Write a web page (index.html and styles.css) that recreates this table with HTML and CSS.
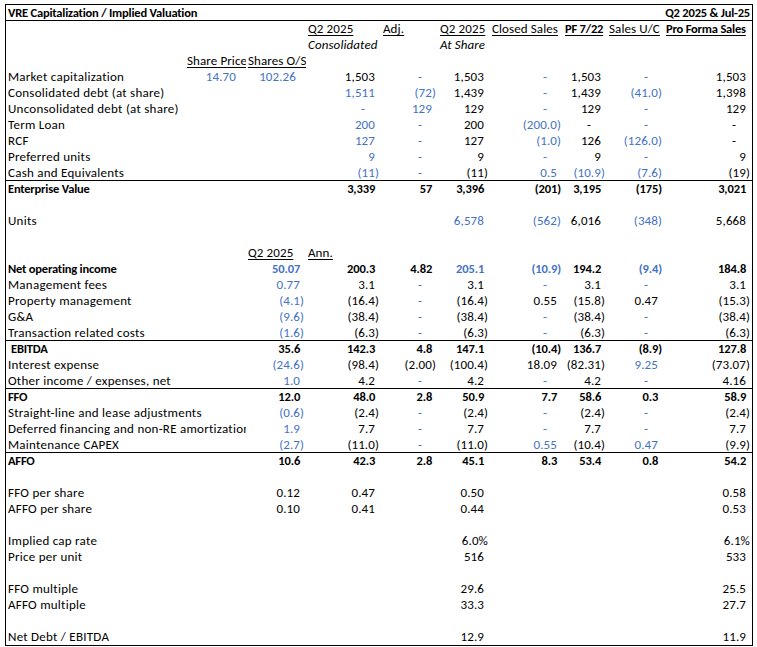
FILE: index.html
```html
<!DOCTYPE html>
<html>
<head>
<meta charset="utf-8">
<link rel="stylesheet" href="styles.css">
</head>
<body>
<div class="sheet">
  <div class="title"><span>VRE Capitalization / Implied Valuation</span><span>Q2 2025 &amp; Jul-25</span></div>

  <div class="row"><div></div><div></div><div></div><div class="h u">Q2 2025</div><div class="h u">Adj.</div><div class="h u">Q2 2025</div><div class="h u">Closed Sales</div><div class="h u bo">PF 7/22</div><div class="h u">Sales U/C</div><div class="h u bo">Pro Forma Sales</div></div>
  <div class="row"><div></div><div></div><div></div><div class="h i">Consolidated</div><div></div><div class="h i">At Share</div><div></div><div></div><div></div><div></div></div>
  <div class="row"><div></div><div class="h u">Share Price</div><div class="h u">Shares O/S</div><div></div><div></div><div></div><div></div><div></div><div></div><div></div></div>

  <div class="row"><div class="l">Market capitalization</div><div class="n b x">14.70</div><div class="n b x">102.26</div><div class="n">1,503</div><div class="n d b">-</div><div class="n">1,503</div><div class="n d b">-</div><div class="n">1,503</div><div class="n d b">-</div><div class="n">1,503</div></div>
  <div class="row"><div class="l s2">Consolidated debt (at share)</div><div></div><div class="n b">1,511</div><div class="n ng b">(72)</div><div class="n">1,439</div><div class="n d b">-</div><div class="n">1,439</div><div class="n ng b">(41.0)</div><div class="n">1,398</div></div>
  <div class="row"><div class="l s2">Unconsolidated debt (at share)</div><div></div><div class="n d b">-</div><div class="n b">129</div><div class="n">129</div><div class="n d b">-</div><div class="n">129</div><div class="n d b">-</div><div class="n">129</div></div>
  <div class="row"><div class="l s2">Term Loan</div><div></div><div class="n b">200</div><div class="n d b">-</div><div class="n">200</div><div class="n ng b">(200.0)</div><div class="n d">-</div><div class="n d b">-</div><div class="n d">-</div></div>
  <div class="row"><div class="l s2">RCF</div><div></div><div class="n b">127</div><div class="n d b">-</div><div class="n">127</div><div class="n ng b">(1.0)</div><div class="n">126</div><div class="n ng b">(126.0)</div><div class="n d">-</div></div>
  <div class="row"><div class="l s2">Preferred units</div><div></div><div class="n b">9</div><div class="n d b">-</div><div class="n">9</div><div class="n d b">-</div><div class="n">9</div><div class="n d b">-</div><div class="n">9</div></div>
  <div class="row rule"><div class="l s2">Cash and Equivalents</div><div></div><div class="n ng b">(11)</div><div class="n d b">-</div><div class="n ng">(11)</div><div class="n b">0.5</div><div class="n ng b">(10.9)</div><div class="n ng b">(7.6)</div><div class="n ng">(19)</div></div>
  <div class="row bold"><div class="l s2">Enterprise Value</div><div></div><div class="n">3,339</div><div class="n">57</div><div class="n">3,396</div><div class="n ng">(201)</div><div class="n">3,195</div><div class="n ng">(175)</div><div class="n">3,021</div></div>

  <div class="row"></div>
  <div class="row"><div class="l s2">Units</div><div></div><div></div><div></div><div class="n b">6,578</div><div class="n ng b">(562)</div><div class="n">6,016</div><div class="n ng b">(348)</div><div class="n">5,668</div></div>
  <div class="row"></div>

  <div class="row"><div></div><div></div><div class="h u">Q2 2025</div><div class="h u">Ann.</div><div></div><div></div><div></div><div></div><div></div><div></div></div>
  <div class="row bold"><div class="l s2">Net operating income</div><div class="n b">50.07</div><div class="n">200.3</div><div class="n">4.82</div><div class="n b">205.1</div><div class="n ng b">(10.9)</div><div class="n">194.2</div><div class="n ng b">(9.4)</div><div class="n">184.8</div></div>
  <div class="row"><div class="l s2">Management fees</div><div class="n b">0.77</div><div class="n">3.1</div><div class="n d b">-</div><div class="n">3.1</div><div class="n d b">-</div><div class="n">3.1</div><div class="n d b">-</div><div class="n">3.1</div></div>
  <div class="row"><div class="l s2">Property management</div><div class="n ng b">(4.1)</div><div class="n ng">(16.4)</div><div class="n d b">-</div><div class="n ng">(16.4)</div><div class="n">0.55</div><div class="n ng">(15.8)</div><div class="n">0.47</div><div class="n ng">(15.3)</div></div>
  <div class="row"><div class="l s2">G&amp;A</div><div class="n ng b">(9.6)</div><div class="n ng">(38.4)</div><div class="n d b">-</div><div class="n ng">(38.4)</div><div class="n d b">-</div><div class="n ng">(38.4)</div><div class="n d b">-</div><div class="n ng">(38.4)</div></div>
  <div class="row rule"><div class="l s2">Transaction related costs</div><div class="n ng b">(1.6)</div><div class="n ng">(6.3)</div><div class="n d b">-</div><div class="n ng">(6.3)</div><div class="n d b">-</div><div class="n ng">(6.3)</div><div class="n d b">-</div><div class="n ng">(6.3)</div></div>
  <div class="row bold"><div class="l s2 ind">EBITDA</div><div class="n">35.6</div><div class="n">142.3</div><div class="n">4.8</div><div class="n">147.1</div><div class="n ng">(10.4)</div><div class="n">136.7</div><div class="n ng">(8.9)</div><div class="n">127.8</div></div>
  <div class="row"><div class="l s2">Interest expense</div><div class="n ng b">(24.6)</div><div class="n ng">(98.4)</div><div class="n ng">(2.00)</div><div class="n ng">(100.4)</div><div class="n">18.09</div><div class="n ng">(82.31)</div><div class="n b">9.25</div><div class="n ng">(73.07)</div></div>
  <div class="row rule"><div class="l s2">Other income / expenses, net</div><div class="n b">1.0</div><div class="n">4.2</div><div class="n d b">-</div><div class="n">4.2</div><div class="n d b">-</div><div class="n">4.2</div><div class="n d b">-</div><div class="n">4.16</div></div>
  <div class="row bold"><div class="l s2">FFO</div><div class="n">12.0</div><div class="n">48.0</div><div class="n">2.8</div><div class="n">50.9</div><div class="n">7.7</div><div class="n">58.6</div><div class="n">0.3</div><div class="n">58.9</div></div>
  <div class="row"><div class="l s2">Straight-line and lease adjustments</div><div class="n ng b">(0.6)</div><div class="n ng">(2.4)</div><div class="n d b">-</div><div class="n ng">(2.4)</div><div class="n d b">-</div><div class="n ng">(2.4)</div><div class="n d b">-</div><div class="n ng">(2.4)</div></div>
  <div class="row"><div class="l s2">Deferred financing and non-RE amortization</div><div class="n b">1.9</div><div class="n">7.7</div><div class="n d b">-</div><div class="n">7.7</div><div class="n d b">-</div><div class="n">7.7</div><div class="n d b">-</div><div class="n">7.7</div></div>
  <div class="row rule"><div class="l s2">Maintenance CAPEX</div><div class="n ng b">(2.7)</div><div class="n ng">(11.0)</div><div class="n d b">-</div><div class="n ng">(11.0)</div><div class="n b">0.55</div><div class="n ng">(10.4)</div><div class="n b">0.47</div><div class="n ng">(9.9)</div></div>
  <div class="row bold"><div class="l s2">AFFO</div><div class="n">10.6</div><div class="n">42.3</div><div class="n">2.8</div><div class="n">45.1</div><div class="n">8.3</div><div class="n">53.4</div><div class="n">0.8</div><div class="n">54.2</div></div>

  <div class="row"></div>
  <div class="row"><div class="l s2">FFO per share</div><div class="n">0.12</div><div class="n">0.47</div><div></div><div class="n">0.50</div><div></div><div></div><div></div><div class="n">0.58</div></div>
  <div class="row"><div class="l s2">AFFO per share</div><div class="n">0.10</div><div class="n">0.41</div><div></div><div class="n">0.44</div><div></div><div></div><div></div><div class="n">0.53</div></div>
  <div class="row"></div>
  <div class="row"><div class="l s2">Implied cap rate</div><div></div><div></div><div></div><div class="n ng">6.0%</div><div></div><div></div><div></div><div class="n ng">6.1%</div></div>
  <div class="row"><div class="l s2">Price per unit</div><div></div><div></div><div></div><div class="n">516</div><div></div><div></div><div></div><div class="n">533</div></div>
  <div class="row"></div>
  <div class="row"><div class="l s2">FFO multiple</div><div></div><div></div><div></div><div class="n">29.6</div><div></div><div></div><div></div><div class="n">25.5</div></div>
  <div class="row"><div class="l s2">AFFO multiple</div><div></div><div></div><div></div><div class="n">33.3</div><div></div><div></div><div></div><div class="n">27.7</div></div>
  <div class="row"></div>
  <div class="row"><div class="l s2">Net Debt / EBITDA</div><div></div><div></div><div></div><div class="n">12.9</div><div></div><div></div><div></div><div class="n">11.9</div></div>
</div>
</body>
</html>
```

FILE: styles.css
```css
* { box-sizing: border-box; }

body {
  margin: 0;
  background: #ffffff;
  color: #000000;
  font-family: Carlito, Calibri, Lato, "Liberation Sans", sans-serif;
  font-size: 13px;
  letter-spacing: 0.25px;
}

.sheet {
  margin: 4px 0 0 5px;
  width: 748px;
  border: 1px solid #000000;
}

.title {
  display: flex;
  justify-content: space-between;
  height: 16px;
  line-height: 15px;
  padding: 0 2px 0 2px;
  font-weight: 700;
  font-size: 12.5px;
  letter-spacing: -0.2px;
  border-bottom: 1px solid #000000;
}

.row {
  display: grid;
  grid-template-columns: 179px 61px 60px 75px 57px 52px 73px 44px 57px 88px;
  height: 16px;
  line-height: 16px;
}

.row > div {
  overflow: hidden;
  white-space: nowrap;
  min-width: 0;
}

.row.rule {
  border-bottom: 1px solid #000000;
  line-height: 15px;
}

.bold,
.bo {
  font-weight: 700;
  font-size: 12.5px;
  letter-spacing: -0.2px;
}

.l { padding-left: 2px; }
.ind { padding-left: 5px; }
.s2 { grid-column: span 2; }

.h {
  padding-left: 2px;
  letter-spacing: 0.1px;
}
.h.bo { letter-spacing: -0.2px; }
.u {
  text-decoration: underline;
  text-underline-offset: 2px;
}
.i { font-style: italic; }

.n {
  text-align: right;
  padding-right: 2px;
  letter-spacing: 0.1px;
}
.bold .n { letter-spacing: -0.1px; }
.n::after {
  content: ")";
  visibility: hidden;
}
.n.ng::after { content: none; }
.n.d::after {
  content: "";
  display: inline-block;
  width: 14px;
}
.n.x { padding-right: 6px; }

.b { color: #4472c4; }
```
